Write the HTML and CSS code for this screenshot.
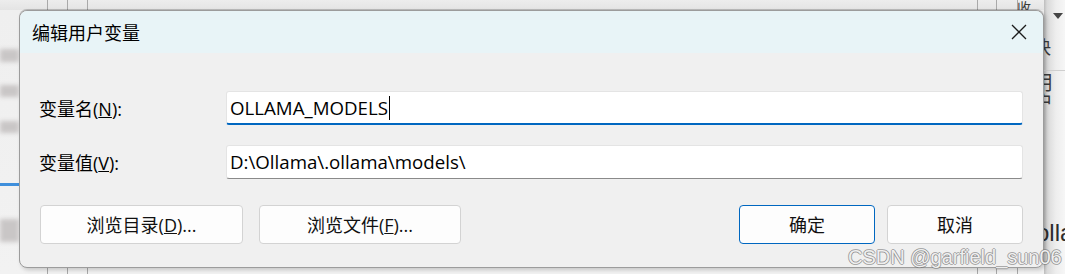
FILE: index.html
```html
<!DOCTYPE html>
<html lang="zh-CN">
<head>
<meta charset="utf-8">
<title>编辑用户变量</title>
<link rel="stylesheet" href="styles.css">
</head>
<body>
<div class="backdrop">
  <div class="vline" style="left:47px"></div>
  <div class="vline" style="left:67px"></div>
  <div class="vline" style="left:87px"></div>
  <div class="vline" style="left:977px"></div>
  <div class="vline" style="left:996px"></div>
  <div class="vline" style="left:1017px"></div>
  <div class="blur-block" style="top:49px;height:13px"></div>
  <div class="blur-block" style="top:85px;height:12px"></div>
  <div class="blur-block" style="top:121px;height:12px"></div>
  <div class="blue-line"></div>
  <div class="blur-block" style="top:219px;height:23px"></div>
  <div class="right-panel"></div>
  <div class="right-rule"></div>
  <span class="bg-text shou">收</span>
  <span class="bg-arrow"></span>
  <span class="bg-text kuai">快</span>
  <span class="bg-text yonghu">用户</span>
  <span class="bg-text olla">olla</span>
</div>

<div class="stage">
  <div class="dialog">
    <div class="titlebar">
      <span class="title">编辑用户变量</span>
      <button class="close" aria-label="关闭">
        <svg width="16" height="16" viewBox="0 0 16 16"><path d="M1 1 L15 15 M15 1 L1 15" stroke="#1b1b1b" stroke-width="1.3" fill="none"/></svg>
      </button>
    </div>
    <div class="content">
      <div class="field">
        <label class="label">变量名(<u>N</u>):</label>
        <div class="input focused"><span class="value">OLLAMA_MODELS</span><span class="caret"></span></div>
      </div>
      <div class="field">
        <label class="label">变量值(<u>V</u>):</label>
        <div class="input"><span class="value">D:\Ollama\.ollama\models\</span></div>
      </div>
      <div class="buttons">
        <div class="group left">
          <button class="btn wide">浏览目录(<u>D</u>)...</button>
          <button class="btn wide2">浏览文件(<u>F</u>)...</button>
        </div>
        <div class="group right">
          <button class="btn narrow primary">确定</button>
          <button class="btn narrow">取消</button>
        </div>
      </div>
    </div>
  </div>
</div>

<div class="watermark">CSDN @garfield_sun06</div>
</body>
</html>
```

FILE: styles.css
```css
html, body {
  margin: 0;
  padding: 0;
}
body {
  width: 1065px;
  height: 274px;
  overflow: hidden;
  position: relative;
  background: linear-gradient(#ededed, #e4e4e4 10px, #efefef 10px, #f2f2f2);
  font-family: "Open Sans", "Noto Sans CJK SC", sans-serif;
  color: #000;
}

/* ---------- background canvas ---------- */
.backdrop {
  position: absolute;
  inset: 0;
  z-index: 0;
}
.vline {
  position: absolute;
  top: 0;
  bottom: 0;
  width: 1px;
  background: #a9a9a9;
}
.blur-block {
  position: absolute;
  left: 0;
  width: 19px;
  background: #c9c6c6;
  filter: blur(2px);
}
.blue-line {
  position: absolute;
  left: 0;
  width: 20px;
  top: 183px;
  height: 3px;
  background: #3f8fdc;
}
.right-panel {
  position: absolute;
  left: 1044px;
  top: 0;
  width: 21px;
  height: 274px;
  background: linear-gradient(90deg, #bdbdbd 0, #d9d9d9 3px, #eeeeee 12px, #f6f6f6);
}
.right-rule {
  position: absolute;
  left: 1044px;
  top: 70px;
  width: 21px;
  height: 1px;
  background: #cfcfcf;
}
.bg-text {
  position: absolute;
  font-family: "Noto Sans CJK SC", sans-serif;
  color: #3a3a3a;
  line-height: 1;
}
.shou { left: 1017px; top: 0; font-size: 14px; }
.kuai { left: 1033px; top: 37px; font-size: 18px; }
.yonghu { left: 1033px; top: 72px; font-size: 20px; }
.olla {
  left: 1036px;
  top: 221px;
  font-family: "Liberation Sans", sans-serif;
  font-size: 24px;
  color: #2c2c2c;
}
.bg-arrow {
  position: absolute;
  left: 1053px;
  top: 13px;
  width: 0;
  height: 0;
  border-left: 5px solid transparent;
  border-right: 5px solid transparent;
  border-top: 6px solid #454545;
}

/* ---------- dialog ---------- */
.stage {
  position: relative;
  z-index: 1;
  padding: 10px 0 0 19px;
}
.dialog {
  width: 1025px;
  height: 258px;
  box-sizing: border-box;
  border: 1px solid #9c9c9c;
  border-radius: 8px;
  overflow: hidden;
  background: #f0f0f0;
  box-shadow: 0 -1px 0 rgba(0,0,0,0.18), 2px 2px 4px rgba(0,0,0,0.18);
  display: flex;
  flex-direction: column;
}
.titlebar {
  height: 42px;
  flex: none;
  display: flex;
  align-items: center;
  justify-content: space-between;
  padding-left: 12px;
  background: #e8f4f7;
}
.title {
  font-size: 18px;
  font-family: "Noto Sans CJK SC", sans-serif;
  color: #000;
}
.close {
  width: 48px;
  height: 42px;
  border: 0;
  padding: 0;
  background: transparent;
  display: flex;
  align-items: center;
  justify-content: center;
}
.close svg { display: block; }

.content {
  flex: 1;
  display: flex;
  flex-direction: column;
  padding: 38px 20px 0 19px;
}
.field {
  display: flex;
  align-items: center;
  height: 34px;
}
.field + .field { margin-top: 20px; }
.label {
  width: 187px;
  flex: none;
  font-size: 18px;
  line-height: 24px;
  padding-top: 1px;
}
.input {
  flex: 1;
  height: 34px;
  box-sizing: border-box;
  background: #fff;
  border: 1px solid #e4e4e4;
  border-bottom: 1px solid #8a8a8a;
  border-radius: 3px;
  padding-left: 3px;
  display: flex;
  align-items: center;
  font-size: 18.7px;
  line-height: 24px;
  color: #000;
}
.input.focused {
  border-bottom: 2px solid #0067c0;
}
.value {
  white-space: pre;
}
.caret {
  width: 1px;
  height: 24px;
  background: #000;
  margin-left: 1px;
}

.buttons {
  display: flex;
  justify-content: space-between;
  margin-top: 26px;
  padding-left: 1px;
}
.group {
  display: flex;
}
.group.left { gap: 16px; }
.group.right { gap: 12px; }
.btn {
  height: 39px;
  box-sizing: border-box;
  background: #fdfdfd;
  border: 1px solid #d3d3d3;
  border-radius: 4px;
  font-family: "Open Sans", "Noto Sans CJK SC", sans-serif;
  font-size: 18px;
  line-height: 24px;
  color: #111;
  padding: 0;
}
.btn.wide { width: 203px; }
.btn.wide2 { width: 202px; }
.btn.narrow { width: 136px; }
.btn.primary {
  border: 1px solid #0067c0;
}

/* ---------- watermark overlay ---------- */
.watermark {
  position: absolute;
  z-index: 2;
  left: 848px;
  top: 246px;
  font-family: "Liberation Sans", sans-serif;
  font-size: 20px;
  line-height: 23px;
  white-space: nowrap;
  color: rgba(255,255,255,0.9);
  text-shadow: 1px 0 rgba(110,110,110,0.55), -1px 0 rgba(110,110,110,0.55), 0 1px rgba(110,110,110,0.55), 0 -1px rgba(110,110,110,0.55);
}
```
